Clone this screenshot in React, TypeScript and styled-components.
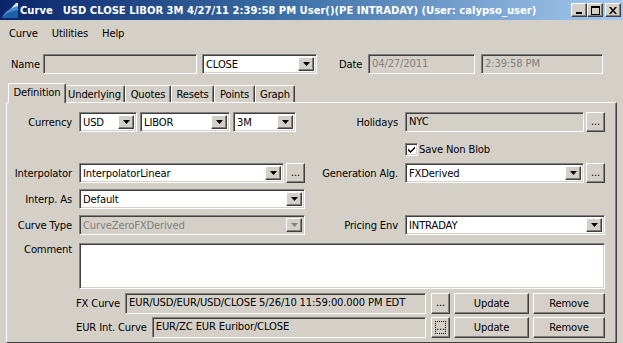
import React from "react";
import styled, { createGlobalStyle, css } from "styled-components";

const GlobalStyle = createGlobalStyle`
  html, body { margin: 0; padding: 0; background: #d4d0c8; }
  body {
    font-family: "DejaVu Sans", Tahoma, sans-serif;
    font-size: 10px;
    letter-spacing: -0.15px;
    color: #000;
  }
  * { box-sizing: border-box; }
`;

const sunken = css`
  border: 1px solid;
  border-color: #808080 #ffffff #ffffff #808080;
  box-shadow: inset 1px 1px #404040, inset -1px -1px #d4d0c8;
`;

const raised = css`
  border: 1px solid;
  border-color: #ffffff #404040 #404040 #ffffff;
  box-shadow: inset -1px -1px #808080, inset 1px 1px #d4d0c8;
`;

const Window = styled.div`
  width: 623px;
  height: 343px;
  overflow: hidden;
  display: flex;
  flex-direction: column;
`;

const TitleBar = styled.div`
  height: 20px;
  display: flex;
  align-items: center;
  padding: 0 2px;
  background: linear-gradient(to right, #0a246a 0%, #3a6ea5 45%, #a6caf0 100%);
  color: #fff;
  font-weight: bold;
  letter-spacing: 0;
  white-space: nowrap;
`;

const TitleName = styled.span`
  margin-left: 2px;
`;

const TitleText = styled.span`
  margin-left: 10px;
`;

const WinButtons = styled.div`
  margin-left: auto;
  display: flex;
  gap: 2px;
`;

const WinPair = styled.div`
  display: flex;
`;

const WinButton = styled.div`
  ${raised};
  width: 16px;
  height: 14px;
  background: #d4d0c8;
  display: flex;
  align-items: center;
  justify-content: center;
`;

const MenuBar = styled.div`
  height: 23px;
  display: flex;
  align-items: center;
  padding: 4px 0 0 2px;
`;

const MenuItem = styled.span`
  padding: 0 7px;
`;

const TopRow = styled.div`
  margin-top: 11px;
  height: 20px;
  display: flex;
  align-items: center;
  padding-left: 11px;
`;

const Label = styled.span<{ $w?: number; $left?: number }>`
  white-space: nowrap;
  flex: none;
  width: ${(p) => (p.$w ? `${p.$w}px` : "auto")};
  margin-left: ${(p) => p.$left ?? 0}px;
  margin-right: ${(p) => (p.$w ? 0 : 5)}px;
`;

const Field = styled.div<{ $w?: number; $white?: boolean; $dim?: boolean }>`
  ${sunken};
  height: ${(p) => (p.$w ? "20px" : "100%")};
  width: ${(p) => (p.$w ? `${p.$w}px` : "auto")};
  flex: ${(p) => (p.$w ? "none" : "1 1 0")};
  min-width: 0;
  background: ${(p) => (p.$white ? "#fff" : "#d4d0c8")};
  color: ${(p) => (p.$dim ? "#808080" : "#000")};
  padding: 0 3px;
  line-height: 18px;
  white-space: nowrap;
  overflow: hidden;
`;

const ComboBox = styled.div<{ $w?: number; $disabled?: boolean }>`
  ${sunken};
  height: 20px;
  width: ${(p) => (p.$w ? `${p.$w}px` : "100%")};
  flex: ${(p) => (p.$w ? "none" : "1 1 0")};
  min-width: 0;
  background: ${(p) => (p.$disabled ? "#d4d0c8" : "#fff")};
  color: ${(p) => (p.$disabled ? "#808080" : "#000")};
  display: flex;
  align-items: stretch;
  padding: 2px;
`;

const ComboText = styled.span`
  flex: 1;
  line-height: 16px;
  padding-left: 1px;
  white-space: nowrap;
  overflow: hidden;
`;

const ComboArrow = styled.div`
  ${raised};
  width: 16px;
  flex: none;
  background: #d4d0c8;
  display: flex;
  align-items: center;
  justify-content: center;
`;

const Tabs = styled.div`
  margin-top: 9px;
  height: 19px;
  display: flex;
  align-items: flex-end;
  padding-left: 10px;
  position: relative;
  z-index: 2;
`;

const Tab = styled.div<{ $w: number; $active?: boolean }>`
  width: ${(p) => p.$w + (p.$active ? 4 : 0)}px;
  height: ${(p) => (p.$active ? 20 : 17)}px;
  margin: ${(p) => (p.$active ? "0 -2px -1px -2px" : "0")};
  border: 1px solid;
  border-bottom: none;
  border-color: #ffffff #404040 #404040 #ffffff;
  box-shadow: inset -1px 0 #808080;
  border-radius: 2px 2px 0 0;
  background: #d4d0c8;
  display: flex;
  align-items: center;
  justify-content: center;
  padding-bottom: ${(p) => (p.$active ? 2 : 0)}px;
  position: relative;
  z-index: ${(p) => (p.$active ? 3 : 1)};
`;

const Panel = styled.div`
  flex: 1;
  margin: 0 6px;
  border: 1px solid;
  border-color: #ffffff #404040 #404040 #ffffff;
  box-shadow: inset -1px 0 #808080;
  padding-top: 9px;
  display: flex;
  flex-direction: column;
`;

const FormRow = styled.div<{ $top?: number; $h?: number }>`
  display: grid;
  grid-template-columns: 65px 226px 86px 200px;
  column-gap: 7px;
  height: ${(p) => p.$h ?? 20}px;
  margin-top: ${(p) => p.$top ?? 0}px;
  align-items: center;
`;

const RowLabel = styled.span<{ $top?: boolean }>`
  text-align: right;
  white-space: nowrap;
  align-self: ${(p) => (p.$top ? "start" : "center")};
  padding-top: ${(p) => (p.$top ? 1 : 0)}px;
`;

const Controls = styled.div<{ $gap?: number }>`
  display: flex;
  gap: ${(p) => p.$gap ?? 2}px;
  height: 20px;
  align-items: stretch;
  min-width: 0;
`;

const Ellipsis = styled.div<{ $focus?: boolean }>`
  ${raised};
  width: 19px;
  flex: none;
  background: #d4d0c8;
  display: flex;
  align-items: center;
  justify-content: center;
  padding-bottom: 2px;
  position: relative;
  ${(p) =>
    p.$focus &&
    css`
      &::after {
        content: "";
        position: absolute;
        inset: 3px;
        border: 1px dotted #000;
      }
    `}
`;

const CheckRow = styled.label`
  grid-column: 4;
  display: flex;
  align-items: center;
  gap: 1px;
`;

const CheckBox = styled.span`
  ${sunken};
  width: 13px;
  height: 13px;
  background: #fff;
  display: flex;
  align-items: center;
  justify-content: center;
`;

const CommentArea = styled.div`
  ${sunken};
  grid-column: 2 / 5;
  height: 46px;
  background: #fff;
`;

const CurveRow = styled.div<{ $top: number }>`
  display: grid;
  grid-template-columns: 1fr 19px 75px 72px;
  column-gap: 4px;
  height: 21px;
  margin-top: ${(p) => p.$top}px;
  margin-left: 69px;
  width: 529px;
`;

const CurveField = styled.div`
  display: flex;
  align-items: center;
  margin-right: 1px;
`;

const PushButton = styled.div`
  ${raised};
  background: #d4d0c8;
  display: flex;
  align-items: center;
  justify-content: center;
`;

const Arrow = ({ disabled }: { disabled?: boolean }) => (
  <svg width="7" height="4" viewBox="0 0 7 4">
    <path d="M0 0h7L3.5 4z" fill={disabled ? "#808080" : "#000"} />
  </svg>
);

const Combo = ({ w, value, disabled }: { w?: number; value: string; disabled?: boolean }) => (
  <ComboBox $w={w} $disabled={disabled}>
    <ComboText>{value}</ComboText>
    <ComboArrow>
      <Arrow disabled={disabled} />
    </ComboArrow>
  </ComboBox>
);

const AppIcon = () => (
  <svg width="16" height="16" viewBox="0 0 16 16">
    <path d="M1 15L14 1h2v14z" fill="#dfe9f5" />
    <path d="M0 16C3 9 8 6 16 4v12z" fill="#4a8fd0" />
    <path d="M0 16C4 11 9 9 16 8v8z" fill="#1f5fa8" />
  </svg>
);

const tabs = [
  { name: "Definition", w: 54 },
  { name: "Underlying", w: 61 },
  { name: "Quotes", w: 46 },
  { name: "Resets", w: 43 },
  { name: "Points", w: 41 },
  { name: "Graph", w: 40 },
];

export default function App() {
  return (
    <>
      <GlobalStyle />
      <Window>
        <TitleBar>
          <AppIcon />
          <TitleName>Curve</TitleName>
          <TitleText>
            USD CLOSE LIBOR 3M 4/27/11 2:39:58 PM User()(PE INTRADAY) (User: calypso_user)
          </TitleText>
          <WinButtons>
            <WinPair>
              <WinButton>
                <svg width="8" height="8" viewBox="0 0 8 8">
                  <rect x="1" y="6" width="6" height="2" fill="#000" />
                </svg>
              </WinButton>
              <WinButton>
                <svg width="9" height="9" viewBox="0 0 9 9">
                  <path d="M0 0h9v9H0z M1 2v6h7V2z" fill="#000" fillRule="evenodd" />
                </svg>
              </WinButton>
            </WinPair>
            <WinButton>
              <svg width="8" height="7" viewBox="0 0 8 7">
                <path d="M0 0h2l2 2.5L6 0h2L5 3.5 8 7H6L4 4.5 2 7H0l3-3.5z" fill="#000" />
              </svg>
            </WinButton>
          </WinButtons>
        </TitleBar>

        <MenuBar>
          <MenuItem>Curve</MenuItem>
          <MenuItem>Utilities</MenuItem>
          <MenuItem>Help</MenuItem>
        </MenuBar>

        <TopRow>
          <Label $w={32}>Name</Label>
          <Field $w={154} />
          <Label $w={5} />
          <Combo w={115} value="CLOSE" />
          <Label $w={29} $left={22}>
            Date
          </Label>
          <Field $w={107} $dim>
            04/27/2011
          </Field>
          <Label $w={6} />
          <Field $w={122} $dim>
            2:39:58 PM
          </Field>
        </TopRow>

        <Tabs>
          {tabs.map((t, i) => (
            <Tab key={t.name} $w={t.w} $active={i === 0}>
              {t.name}
            </Tab>
          ))}
        </Tabs>

        <Panel>
          <FormRow>
            <RowLabel>Currency</RowLabel>
            <Controls $gap={3}>
              <Combo w={58} value="USD" />
              <Combo w={90} value="LIBOR" />
              <Combo w={63} value="3M" />
            </Controls>
            <RowLabel>Holidays</RowLabel>
            <Controls>
              <Field>NYC</Field>
              <Ellipsis>...</Ellipsis>
            </Controls>
          </FormRow>

          <FormRow $top={9} $h={16}>
            <CheckRow>
              <CheckBox>
                <svg width="7" height="7" viewBox="0 0 7 7">
                  <path d="M0 2.5l2.5 2.5L7 0.5v2L2.5 7 0 4.5z" fill="#000" />
                </svg>
              </CheckBox>
              Save Non Blob
            </CheckRow>
          </FormRow>

          <FormRow $top={6}>
            <RowLabel>Interpolator</RowLabel>
            <Controls>
              <Combo value="InterpolatorLinear" />
              <Ellipsis>...</Ellipsis>
            </Controls>
            <RowLabel>Generation Alg.</RowLabel>
            <Controls>
              <Combo value="FXDerived" />
              <Ellipsis>...</Ellipsis>
            </Controls>
          </FormRow>

          <FormRow $top={6}>
            <RowLabel>Interp. As</RowLabel>
            <Combo value="Default" />
          </FormRow>

          <FormRow $top={6}>
            <RowLabel>Curve Type</RowLabel>
            <Combo value="CurveZeroFXDerived" disabled />
            <RowLabel>Pricing Env</RowLabel>
            <Combo value="INTRADAY" />
          </FormRow>

          <FormRow $top={8} $h={46}>
            <RowLabel $top>Comment</RowLabel>
            <CommentArea />
          </FormRow>

          <CurveRow $top={4}>
            <CurveField>
              <Label>FX Curve</Label>
              <Field>EUR/USD/EUR/USD/CLOSE 5/26/10 11:59:00.000 PM EDT</Field>
            </CurveField>
            <Ellipsis>...</Ellipsis>
            <PushButton>Update</PushButton>
            <PushButton>Remove</PushButton>
          </CurveRow>

          <CurveRow $top={3}>
            <CurveField>
              <Label>EUR Int. Curve</Label>
              <Field>EUR/ZC EUR Euribor/CLOSE</Field>
            </CurveField>
            <Ellipsis $focus>...</Ellipsis>
            <PushButton>Update</PushButton>
            <PushButton>Remove</PushButton>
          </CurveRow>
        </Panel>
      </Window>
    </>
  );
}
